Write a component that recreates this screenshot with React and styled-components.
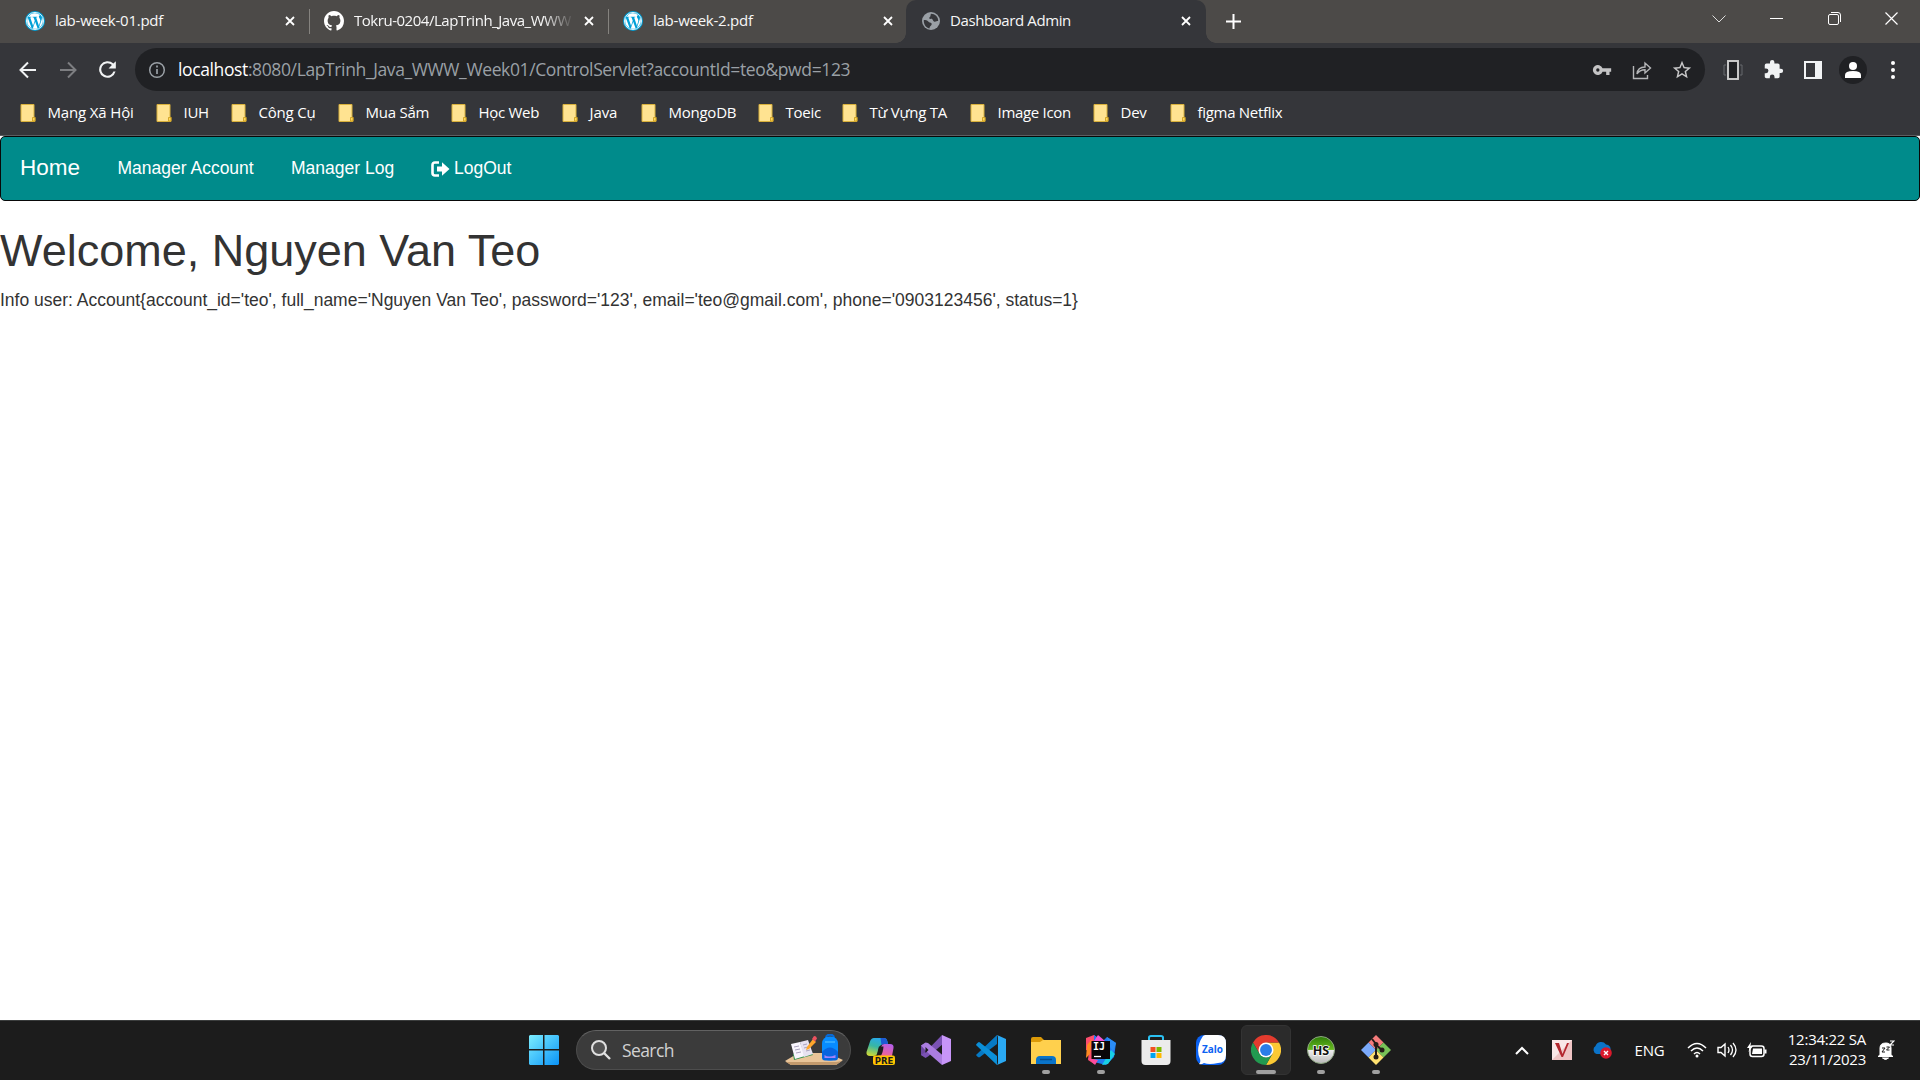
import React from "react";
import styled, { createGlobalStyle } from "styled-components";

const Global = createGlobalStyle`
  *{box-sizing:border-box}
  body{margin:0;background:#fff;overflow:hidden}
`;
const ui = `"Open Sans","Noto Sans",sans-serif`;

const Screen = styled.div`width:1920px;height:1080px;display:flex;flex-direction:column;overflow:hidden;`;
const TabStrip = styled.header`height:43px;flex:none;background:#4c4a48;display:flex;align-items:stretch;`;
const Tab = styled.div`
  width:${p => p.$w}px;flex:none;display:flex;align-items:center;position:relative;
  padding:0 ${p => p.$r}px 2px ${p => p.$l}px;
  background:${p => (p.$active ? "#35363a" : "transparent")};
  border-radius:${p => (p.$active ? "10px 10px 0 0" : "0")};
  border-right:${p => (p.$sep ? "1px solid transparent" : "0")};
  svg{flex:none;display:block}
  ${p => p.$sep && `&::after{content:"";position:absolute;right:-1px;top:9px;height:25px;width:1px;background:#85837f}`}
  ${p => p.$active && `
    &::before,&::after{content:"";position:absolute;bottom:0;width:10px;height:10px}
    &::before{left:-10px;background:radial-gradient(circle at 0 0,transparent 9.5px,#35363a 10px)}
    &::after{right:-10px;background:radial-gradient(circle at 100% 0,transparent 9.5px,#35363a 10px)}
  `}
`;
const TabTitle = styled.span`
  flex:1;min-width:0;margin:0 10px;padding-bottom:2px;white-space:nowrap;color:#f7f7f7;
  font:15px/22px ${ui};letter-spacing:${p => p.$ls || 0}px;
  ${p => p.$fade && "mask-image:linear-gradient(90deg,#000 86%,transparent 100%);"}
`;
const NewTab = styled.div`width:54px;display:flex;align-items:center;justify-content:center;`;
const WindowButtons = styled.div`margin-left:auto;display:flex;padding-bottom:6px;`;
const WinBtn = styled.div`width:57.3px;display:flex;align-items:center;justify-content:center;`;

const Toolbar = styled.div`height:53px;flex:none;background:#35363a;display:flex;align-items:center;padding:0 12px 0 13px;`;
const ToolBtn = styled.div`width:${p => p.$w || 40}px;height:28px;flex:none;display:flex;align-items:center;justify-content:center;`;
const Omnibox = styled.div`
  width:1570px;height:43px;flex:none;margin:0 8px 0 2px;border-radius:22px;background:#202124;
  display:flex;align-items:center;padding:0 3px 0 13px;
`;
const Url = styled.div`flex:1;margin-left:12px;padding-bottom:2px;white-space:nowrap;font:17.5px/26px ${ui};letter-spacing:${p => p.$ls}px;color:#9aa0a6;
  b{font-weight:400;color:#fff}`;
const Avatar = styled.div`width:28px;height:28px;border-radius:50%;background:#202124;overflow:hidden;`;

const Bookmarks = styled.nav`height:40px;flex:none;background:#35363a;border-bottom:1px solid #5d5e61;display:flex;align-items:center;padding:0 0 5px 20px;`;
const Bookmark = styled.div`width:${p => p.$w}px;flex:none;display:flex;align-items:center;gap:11.500px;white-space:nowrap;color:#fff;
  font:15px/22px ${ui};letter-spacing:${p => p.$ls}px;svg{flex:none}
  span{padding-bottom:2px}`;

const Page = styled.main`height:884px;flex:none;background:#fff;color:#333;font-family:"Liberation Sans",Arial,sans-serif;`;
const Navbar = styled.nav`height:65px;border:1px solid #080808;border-radius:5px;background:#008b8b;display:flex;align-items:flex-start;color:#fff;font-size:17.5px;line-height:25px;padding-left:19px;`;
const Brand = styled.a`font-size:22.5px;width:97.500px;padding-top:18px;`;
const NavLink = styled.a`width:${p => p.$w}px;padding-top:19px;display:flex;align-items:center;gap:4px;white-space:nowrap;`;
const Heading = styled.h1`margin:25px 0 12.5px;font-size:45px;line-height:49.5px;font-weight:400;white-space:nowrap;`;
const Info = styled.p`margin:0;font-size:17.5px;line-height:25px;white-space:nowrap;`;

const Taskbar = styled.footer`height:60px;flex:none;background:#1c1c1c;border-top:1px solid #3b3d3d;display:flex;align-items:center;padding:0 0 1px 516px;`;
const TaskItem = styled.div`width:${p => p.$w || 55}px;height:58px;flex:none;display:flex;align-items:center;justify-content:center;position:relative;
  &::after{content:"";position:absolute;bottom:5px;left:50%;transform:translateX(-50%);height:4px;border-radius:2px;
    width:${p => (p.$mark === "wide" ? 20 : p.$mark ? 8 : 0)}px;background:#a0a0a0}
`;
const ActiveTile = styled.div`width:50px;height:50px;border-radius:6px;background:#2b2b2b;border:1px solid #333;display:flex;align-items:center;justify-content:center;`;
const SearchBox = styled.div`width:275px;height:40px;flex:none;margin:0 2px 0 5px;border-radius:20px;background:#3b3b3b;border:1px solid #4d4d4d;border-top-color:#626262;
  display:flex;align-items:center;padding:0 7px 0 14px;color:#d2d2d2;font:17.5px/24px ${ui};
  span{flex:1;margin-left:11px;letter-spacing:-.6px}`;
const Tray = styled.div`margin-left:auto;height:58px;display:flex;align-items:center;padding-right:15px;color:#fff;`;
const TrayCell = styled.div`width:${p => p.$w}px;flex:none;display:flex;align-items:center;justify-content:center;font:15px/22px ${ui};letter-spacing:-.15px;`;
const Clock = styled.div`width:86px;flex:none;font:15px/20px ${ui};text-align:right;white-space:nowrap;padding-bottom:3px;letter-spacing:${p => p.$ls || 0}px;
  div{height:20px}`;

const Svg = ({ w = 20, h, vb, children, ...r }) => (
  <svg width={w} height={h || w} viewBox={vb || `0 0 ${w} ${h || w}`} fill="none" {...r}>{children}</svg>
);
const WP = () => (
  <Svg w={20} vb="0 0 24 24">
    <circle cx="12" cy="12" r="12" fill="#00a0d8" />
    <circle cx="12" cy="12" r="10.3" stroke="#fff" strokeWidth="1" />
    <path d="M2.6 12c0 3.7 2.1 6.9 5.3 8.4L3.4 8.2A9.3 9.3 0 0 0 2.6 12zM18.4 11.5c0-1.2-.4-2-.8-2.6-.5-.8-1-1.4-1-2.2 0-.9.7-1.7 1.6-1.7h.1A9.4 9.4 0 0 0 4.2 6.900h.6c1 0 2.500-.1 2.500-.1.5 0 .6.7.1.8l-1.100.1 3.400 10.100 2-6.100-1.400-4-1-.1c-.5 0-.400-.8.1-.8 0 0 1.500.1 2.500.1l2.500-.1c.5 0 .6.7.1.8l-1.100.1 3.300 10 .9-3.100c.5-1.300.8-2.200.8-3.100zM12.200 12.800l-2.800 8.200c1.800.5 3.900.5 5.800-.1zM20.300 7.500c.1 1.500-.2 2.700-.7 4L16.700 20a9.400 9.400 0 0 0 3.600-12.500z" fill="#fff" />
  </Svg>
);
const GitHub = () => (
  <Svg w={20} vb="0 0 16 16"><path fill="#fff" d="M8 0C3.58 0 0 3.58 0 8c0 3.540 2.290 6.530 5.470 7.590.4.07.55-.17.55-.38 0-.19-.01-.82-.01-1.490-2.010.37-2.530-.49-2.690-.94-.09-.23-.48-.94-.82-1.130-.28-.15-.68-.52-.01-.53.63-.01 1.080.58 1.230.82.72 1.210 1.870.87 2.330.66.07-.52.28-.87.51-1.070-1.780-.2-3.640-.89-3.640-3.950 0-.87.31-1.590.82-2.150-.08-.2-.36-1.020.08-2.120 0 0 .67-.21 2.200.82.64-.18 1.320-.27 2-.27s1.360.09 2 .27c1.530-1.040 2.200-.82 2.200-.82.44 1.100.16 1.920.08 2.120.51.56.82 1.270.82 2.150 0 3.070-1.870 3.750-3.650 3.950.29.25.54.73.54 1.480 0 1.070-.01 1.930-.01 2.200 0 .21.15.46.55.38A8.010 8.010 0 0 0 16 8c0-4.420-3.580-8-8-8z" /></Svg>
);
const Globe = () => (
  <Svg w={18} vb="2 2 20 20"><circle cx="12" cy="12" r="10" fill="#9aa0a6" />
    <path d="M4 11c2 .2 4 .1 5 1.500s2.500 1 3.500 2c1 1.200-.5 2.500-1.500 3.500-.6.6-.4 1.700-.8 2.200C6 19.500 3.700 15.500 4 11zM12 4c-1 1.500 0 2.500-1 3.200-.8.6-1.500 1.500-.5 2.200s2-.4 3 .6.800 2.500 2.300 2.700c1.500.2 2.700-.7 4.200-.7C20.200 7.500 16.500 4 12 4z" fill="#35363a" /></Svg>
);
const Close = () => <Svg w={10}><path d="M1 1l8 8M9 1L1 9" stroke="#fff" strokeWidth="1.800" /></Svg>;
const Folder = () => (
  <Svg w={16} h={18}><path d="M1 .5h13v12l1 1v4H1z" fill="#ffe391" stroke="#d9b13c" /><path d="M12.500 17v-3.500h2.500V17z" fill="#ffd75e" stroke="#c99a16" strokeWidth=".8" /></Svg>
);
const M = ({ d, w = 24, c = "#f1f3f4", ...r }) => <Svg w={w} vb="0 0 24 24" {...r}><path d={d} fill={c} /></Svg>;

const Windows = () => (
  <Svg w={30}><defs><linearGradient id="win" x1="0" y1="0" x2="30" y2="30" gradientUnits="userSpaceOnUse"><stop stopColor="#7ceeff" /><stop offset="1" stopColor="#0a93f7" /></linearGradient></defs>
    <path d="M1 0h13v14H0V1zM15.500 0H29l1 1v13H15.500zM0 15.500h14V30H1l-1-1zM15.500 15.500H30V29l-1 1H15.500z" fill="url(#win)" /></Svg>
);
const SchoolArt = () => (
  <Svg w={58} h={32}>
    <path d="M0 27l10-6 14-2h19l15 7-7 5H6z" fill="#e9c498" /><path d="M1 28l5 3h45l6-4-6 1H5z" fill="#c39a6d" />
    <path d="M8 20l17-4 3 5-19 5z" fill="#35934d" />
    <path d="M6 10l9-2 5 14-10 3z" fill="#f8f5fd" /><path d="M15 8l8-2 5 14-9 3z" fill="#e7e2f1" />
    <path d="M9 13l5-1m-4 4l5-1m-4 4l5-1M18 11l4-1m-3 4l4-1m-2 4l4-1" stroke="#aaa2bd" />
    <path d="M22 13l6-8 3 3-7 7-3 1z" fill="#ffa62b" /><path d="M27 5l2-3 2 .5 1 2-2 3z" fill="#ed5260" />
    <path d="M41 4c0-4.500 8-4.500 8 0" stroke="#0869d6" strokeWidth="2" /><rect x="37" y="2.500" width="16" height="24" rx="7" fill="#078cff" /><path d="M37 18c5-6 11-6 16 0v5.500q0 3-3 3H40q-3 0-3-3z" fill="#0864df" /><path d="M39.500 21q4 3 11 0v3h-11z" fill="#a282fa" /><path d="M40 8h10" stroke="#42b5ff" strokeWidth="1.500" />
  </Svg>
);
const Copilot = () => (
  <Svg w={30} h={30}><defs>
    <linearGradient id="ca" x1="10" y1="2" x2="5" y2="20" gradientUnits="userSpaceOnUse"><stop stopColor="#27a8ee" /><stop offset=".5" stopColor="#38b7a3" /><stop offset="1" stopColor="#c4d63c" /></linearGradient>
    <linearGradient id="cb" x1="22" y1="8" x2="18" y2="22" gradientUnits="userSpaceOnUse"><stop stopColor="#b25ef0" /><stop offset="1" stopColor="#f5648b" /></linearGradient></defs>
    <path d="M8 3h10q2.500 0 3.300 3l.7 3h-3q-5 0-6 4l-1.500 5q-1 3-4 3H4q-4 0-3.500-4L4 6.500Q5 3 8 3z" fill="url(#ca)" /><path d="M14.500 3H18q2.500 0 3.300 3l.7 3h-3q-2.500 0-3.500 1z" fill="#1c5ad4" />
    <path d="M18.500 9H24q4 0 3.500 4L26 21H12l3-9q1-3 3.500-3z" fill="url(#cb)" />
    <path d="M13 11.500q-1 2.500-2 9h4q2-3 2.500-9z" fill="#1c1c1c" />
    <rect x="7" y="20.500" width="22" height="9.500" rx="2" fill="#ffc400" /><text x="18" y="28.500" fontFamily="DejaVu Sans" fontWeight="700" fontSize="8.500" fill="#1c1c1c" textAnchor="middle">PRE</text></Svg>
);
const VS = () => (
  <Svg w={30}>
    <path d="M0 10.500L4.500 8v14L0 20z" fill="#6b46a0" />
    <path d="M0 20l5-3.500L21 0l1 9L7 21.500 4.500 23z" fill="#7a52b3" />
    <path d="M0 10.500L4.500 7.500 7 8l15 12.500L21 30 5 16z" fill="#ab7de0" />
    <path d="M4.500 12v6l3-3z" fill="#1c1c1c" />
    <path d="M21 0l9 4v22l-9 4z" fill="#c795f8" />
  </Svg>
);
const Code = () => (
  <Svg w={30}><path d="M1 19L21 0v9L4 22q-1 .8-2 0l-1.500-1.300q-.8-.8.500-1.700z" fill="#0679c4" /><path d="M1 11l-.5-.5q-.8-.8 0-1.600L2 7.500q1-.8 2 0L21 21v9z" fill="#0b8fd8" /><path d="M21 0l9 4v22l-9 4q1-1 1-3V3q0-2-1-3z" fill="#2aa9f3" /></Svg>
);
const Explorer = () => (
  <Svg w={30} h={27}><path d="M0 2q0-2 2-2h8l3 3h-1v6H0z" fill="#dc9a08" /><path d="M0 5h9l3-2h18v24H0z" fill="#ffd04d" /><path d="M5 27v-4q0-4 4-4h12q4 0 4 4v4z" fill="#0a74c9" /><path d="M9 22.500h12" stroke="#074d8c" strokeWidth="1.500" /></Svg>
);
const IJ = () => (
  <Svg w={30}><path d="M0 3l8-3 8 7-8 22-6-4 1-9-3-1z" fill="#fc4d6d" /><path d="M1 10l5-6-2 15-4 4z" fill="#ff8a22" /><path d="M8 0l9 6 4-4 9 6-2 14-8 8-12-3z" fill="#207cf0" /><path d="M21 2l9 6-3 9-4-7z" fill="#2b8cf5" /><path d="M25 15l4 4-7 10-6 1z" fill="#18d0e5" /><path d="M12 0l7 6H8z" fill="#f553d5" /><path d="M2 23l10 2-3 5z" fill="#fb4b9e" />
    <rect x="5.500" y="6" width="18.500" height="18" fill="#090609" /><text x="7" y="15" fontFamily="DejaVu Sans Mono" fontWeight="700" fontSize="10" fill="#fff">IJ</text><path d="M8 21.500h7" stroke="#fff" strokeWidth="1.300" /></Svg>
);
const Store = () => (
  <Svg w={30} h={30}><path d="M8 6V2.500Q8 1 10 1h10q2 0 2 1.500V6" stroke="#2ac0f1" strokeWidth="2" /><path d="M.5 5h29v21q0 4-4 4h-21q-4 0-4-4z" fill="#ececec" /><path fill="#f25022" d="M9.500 12h5v5h-5z" /><path fill="#7fba00" d="M15.500 12h5v5h-5z" /><path fill="#00a4ef" d="M9.500 18h5v5h-5z" /><path fill="#ffb900" d="M15.500 18h5v5h-5z" /></Svg>
);
const Zalo = () => (
  <Svg w={30}><rect width="30" height="30" rx="8" fill="#0b62f2" /><path d="M9 0h13q8 0 8 8v12q0 8-8 8-9 2-14 0-3 2-5 1 2-2 1-5Q-1 13 7 1z" fill="#fff" /><text x="16.500" y="17.500" textAnchor="middle" fontFamily="Open Sans" fontWeight="700" fontSize="10" fill="#0b62f2" textLength="21" lengthAdjust="spacingAndGlyphs">Zalo</text></Svg>
);
const Chrome = () => (
  <Svg w={30} vb="0 0 48 48"><path d="M24 12h20.800A24 24 0 0 1 24 48l10.400-18z" fill="#fcc934" /><path d="M3.200 12l10.400 18L24 12h20.800A24 24 0 0 0 3.200 12z" fill="#e33b2e" /><path d="M3.200 12a24 24 0 0 0 20.800 36l10.400-18a12 12 0 0 1-20.800 0z" fill="#229a50" /><circle cx="24" cy="24" r="12" fill="#fff" /><circle cx="24" cy="24" r="9.500" fill="#2b7de9" /></Svg>
);
const HS = () => (
  <Svg w={28}><defs><linearGradient id="hs" x2="0" y2="1"><stop stopColor="#2d7c08" /><stop offset=".48" stopColor="#67ba20" /><stop offset=".5" stopColor="#eee" /><stop offset="1" stopColor="#b9b9b9" /></linearGradient></defs><circle cx="14" cy="14" r="13.500" fill="url(#hs)" stroke="#8ca580" /><text x="14" y="18.500" textAnchor="middle" fontFamily="Open Sans" fontWeight="700" fontSize="12.500" fill="#111" stroke="#fff" strokeWidth="1.500" paintOrder="stroke">HS</text></Svg>
);
const Git = () => (
  <Svg w={30}><path d="M15 0l7.500 7.500L15 15 7.500 7.500z" fill="#f57b7b" /><path d="M22.500 7.500L30 15l-7.500 7.500L15 15z" fill="#78c257" /><path d="M7.500 7.500L15 15l-7.500 7.500L0 15z" fill="#7baafb" /><path d="M15 15l7.500 7.500L15 30l-7.500-7.500z" fill="#ffe170" /><path d="M11 4l4 5v13M15 10l6 5" stroke="#241c16" strokeWidth="2" /><circle cx="15" cy="9.500" r="2.500" fill="#241c16" /><circle cx="15" cy="22" r="2.500" fill="#241c16" /><circle cx="21" cy="15" r="2.500" fill="#241c16" /></Svg>
);

const bookmarks = [
  ["Mạng Xã Hội", 136, -0.15], ["IUH", 75, -0.25], ["Công Cụ", 107, -0.2], ["Mua Sắm", 113, -0.25], ["Học Web", 111, -0.3], ["Java", 79, -0.1],
  ["MongoDB", 117, -0.25], ["Toeic", 84, -0.25], ["Từ Vựng TA", 128, -0.25], ["Image Icon", 123, -0.3], ["Dev", 77, -0.25], ["figma Netflix", 130, -0.3],
];

export default function App() {
  return (
    <Screen>
      <Global />
      <TabStrip>
        <Tab $w={310} $l={25} $r={14} $sep><WP /><TabTitle $ls={-0.25}>lab-week-01.pdf</TabTitle><Close /></Tab>
        <Tab $w={299} $l={14} $r={14} $sep><GitHub /><TabTitle $fade $ls={-0.47}>Tokru-0204/LapTrinh_Java_WWW</TabTitle><Close /></Tab>
        <Tab $w={297} $l={14} $r={13}><WP /><TabTitle $ls={-0.25}>lab-week-2.pdf</TabTitle><Close /></Tab>
        <Tab $w={300} $l={16} $r={15} $active><Globe /><TabTitle $ls={-0.4}>Dashboard Admin</TabTitle><Close /></Tab>
        <NewTab><Svg w={15}><path d="M7.500 0v15M0 7.500h15" stroke="#fff" strokeWidth="2" /></Svg></NewTab>
        <WindowButtons>
          <WinBtn><Svg w={14} h={8}><path d="M.5 .5l6.500 6.500 6.500-6.500" stroke="#ddd" /></Svg></WinBtn>
          <WinBtn><Svg w={13} h={1}><path d="M0 .5h13" stroke="#fff" /></Svg></WinBtn>
          <WinBtn><Svg w={13}><rect x=".5" y="2.500" width="10" height="10" rx="1.500" stroke="#fff" /><path d="M3 .5h7q2.500 0 2.500 2.500v7" stroke="#fff" /></Svg></WinBtn>
          <WinBtn><Svg w={13}><path d="M.5 .5l12 12M12.500 .5l-12 12" stroke="#fff" strokeWidth="1.200" /></Svg></WinBtn>
        </WindowButtons>
      </TabStrip>
      <Toolbar>
        <ToolBtn $w={29}><Svg w={18}><path d="M17 9H2M9 1.500L1.500 9 9 16.500" stroke="#f1f3f4" strokeWidth="2" /></Svg></ToolBtn>
        <ToolBtn $w={51}><Svg w={18}><path d="M1 9h15M9 1.500L16.500 9 9 16.500" stroke="#7d7e81" strokeWidth="2" /></Svg></ToolBtn>
        <ToolBtn $w={28}><M w={25} d="M17.650 6.350A8 8 0 1 0 19.730 14h-2.080A6 6 0 1 1 12 6c1.660 0 3.140.69 4.220 1.780L13 11h7V4z" /></ToolBtn>
        <ToolBtn $w={12} />
        <Omnibox>
          <Svg w={18}><circle cx="9" cy="9" r="7.300" stroke="#9aa0a6" strokeWidth="1.500" /><path d="M9 8v5M9 4.500v2" stroke="#9aa0a6" strokeWidth="1.700" /></Svg>
          <Url $ls={-0.38}><b>localhost</b>:8080/LapTrinh_Java_WWW_Week01/ControlServlet?accountId=teo&amp;pwd=123</Url>
          <ToolBtn><M w={20} c="#c4c4c5" d="M12.650 10A6 6 0 1 0 12.650 14H17v4h4v-4h2v-4H12.650zM7 14a2 2 0 1 1 0-4 2 2 0 0 1 0 4z" /></ToolBtn>
          <ToolBtn><Svg w={20}><path d="M1.500 6v12.500h14V15M5 14c.5-5 3-7 8-7V3l5.500 5-5.500 5V9.800c-4 0-6 1-8 4.200z" stroke="#b5b6b8" strokeWidth="1.400" /></Svg></ToolBtn>
          <ToolBtn><M w={22} c="#c8c8c9" d="M22 9.240l-7.190-.62L12 2 9.190 8.630 2 9.240l5.460 4.730L5.820 21 12 17.270 18.180 21l-1.630-7.030L22 9.240zM12 15.400l-3.760 2.270 1-4.280-3.320-2.880 4.380-.38L12 6.100l1.710 4.040 4.380.38-3.320 2.880 1 4.280L12 15.400z" /></ToolBtn>
        </Omnibox>
        <ToolBtn><Svg w={20} h={22}><rect x="5" y="2" width="10" height="18" fill="#202124" stroke="#d0d0d0" strokeWidth="1.900" /><path d="M3 6H1v10h2M17 6h2v10h-2" stroke="#66686c" /></Svg></ToolBtn>
        <ToolBtn><M w={21} d="M20.500 11H19V7a2 2 0 0 0-2-2h-4V3.500a2.500 2.500 0 0 0-5 0V5H4a2 2 0 0 0-2 2v3.800h1.500a2.700 2.700 0 0 1 0 5.400H2V20c0 1.100.9 2 2 2h3.800v-1.500a2.700 2.700 0 0 1 5.400 0V22H17a2 2 0 0 0 2-2v-4h1.500a2.500 2.500 0 0 0 0-5z" /></ToolBtn>
        <ToolBtn><Svg w={18}><path d="M1 1h16v16H1z" stroke="#f1f3f4" strokeWidth="2" /><path d="M11 1h6v16h-6z" fill="#f1f3f4" /></Svg></ToolBtn>
        <ToolBtn><Avatar><Svg w={28}><circle cx="14" cy="10" r="4" fill="#fff" /><path d="M6 22v-3q0-4 8-4t8 4v3z" fill="#fff" /></Svg></Avatar></ToolBtn>
        <ToolBtn><Svg w={4} h={18}><circle cx="2" cy="2" r="2" fill="#fff" /><circle cx="2" cy="9" r="2" fill="#fff" /><circle cx="2" cy="16" r="2" fill="#fff" /></Svg></ToolBtn>
      </Toolbar>
      <Bookmarks>
        {bookmarks.map(([t, w, ls]) => <Bookmark key={t} $w={w} $ls={ls}><Folder /><span>{t}</span></Bookmark>)}
      </Bookmarks>
      <Page>
        <Navbar>
          <Brand>Home</Brand>
          <NavLink $w={173.5}>Manager Account</NavLink>
          <NavLink $w={140}>Manager Log</NavLink>
          <NavLink $w={100}><Svg w={19} h={16}><path d="M8 1.500H4Q1.500 1.500 1.500 4v8q0 2.500 2.500 2.500h4" stroke="#fff" strokeWidth="2.600" /><path d="M6 5.500h5V1.300L18.500 8 11 14.700v-4.200H6z" fill="#fff" /></Svg>LogOut</NavLink>
        </Navbar>
        <Heading>Welcome, Nguyen Van Teo</Heading>
        <Info>Info user: Account{"{"}account_id='teo', full_name='Nguyen Van Teo', password='123', email='teo@gmail.com', phone='0903123456', status=1{"}"}</Info>
      </Page>
      <Taskbar>
        <TaskItem><Windows /></TaskItem>
        <SearchBox><Svg w={20}><circle cx="8" cy="8" r="7" stroke="#e0e0e0" strokeWidth="2" fill="#535353" /><path d="M13 13l6 6" stroke="#e0e0e0" strokeWidth="2.400" /></Svg><span>Search</span><SchoolArt /></SearchBox>
        <TaskItem><Copilot /></TaskItem>
        <TaskItem><VS /></TaskItem>
        <TaskItem><Code /></TaskItem>
        <TaskItem $mark="dot"><Explorer /></TaskItem>
        <TaskItem $mark="dot"><IJ /></TaskItem>
        <TaskItem><Store /></TaskItem>
        <TaskItem><Zalo /></TaskItem>
        <TaskItem $mark="wide"><ActiveTile><Chrome /></ActiveTile></TaskItem>
        <TaskItem $mark="dot"><HS /></TaskItem>
        <TaskItem $mark="dot"><Git /></TaskItem>
        <Tray>
          <TrayCell $w={30}><Svg w={14} h={9}><path d="M1 8l6-6 6 6" stroke="#fff" strokeWidth="2" /></Svg></TrayCell>
          <TrayCell $w={50}><Svg w={20}><path d="M0 0h20v20H0z" fill="#efc4c4" /><path d="M0 0h20L0 20z" fill="#fbf0f0" opacity=".8" /><path d="M3 3l6.500 14h1.500L17 3h-2l-4.500 11L7 3z" fill="#b3262e" /></Svg></TrayCell>
          <TrayCell $w={30}><Svg w={20} h={18}><path d="M4.500 13a4.500 4.500 0 0 1-1-8A6 6 0 0 1 14 3.500a4.500 4.500 0 0 1 4.500 5.500l-3 4z" fill="#0b73c8" /><circle cx="14" cy="12" r="5.800" fill="#d9192b" /><path d="M12 10l4 4M16 10l-4 4" stroke="#fff" strokeWidth="1.400" /></Svg></TrayCell>
          <TrayCell $w={65}>ENG</TrayCell>
          <TrayCell $w={30}><Svg w={20} h={16}><path d="M1 6q9-9 18 0M4 9q6-6 12 0M7 12q3-3 6 0" stroke="#fff" strokeWidth="1.500" /><circle cx="10" cy="14" r="1.500" fill="#fff" /></Svg></TrayCell>
          <TrayCell $w={30}><Svg w={20} h={16}><path d="M1 5.500h3L8 2v12l-4-3.500H1z" stroke="#fff" strokeWidth="1.400" /><path d="M11 5q2 3 0 6M13.500 3q4 5 0 10M16 1q6 7 0 14" stroke="#fff" strokeWidth="1.300" /></Svg></TrayCell>
          <TrayCell $w={30}><Svg w={20} h={16}><rect x="3" y="4" width="14" height="10.500" rx="2.500" stroke="#fff" strokeWidth="1.500" /><path d="M6 6.500h9v5.500H5z" fill="#fff" /><path d="M18.500 7.500v4" stroke="#fff" strokeWidth="2" /><path d="M4 0L0 6h2.500L1.500 10 6 4H3.500z" fill="#fff" /></Svg></TrayCell>
          <TrayCell $w={8} />
          <Clock $ls={-0.25}><div>12:34:22 SA</div><div>23/11/2023</div></Clock>
          <TrayCell $w={39}><Svg w={18} h={20}><path d="M3 15V8q0-5 6-5 5 0 5 5v7l2 1.500H1zM5.500 18h6q-3 3-6 0z" fill="#fff" stroke="#fff" /><path d="M5 8h3l-3 4h3M9.500 7h3l-3 3h3" stroke="#1c1c1c" strokeWidth="1" /><path d="M13 1h4l-4 4h4" stroke="#fff" strokeWidth="1.200" /></Svg></TrayCell>
        </Tray>
      </Taskbar>
    </Screen>
  );
}
